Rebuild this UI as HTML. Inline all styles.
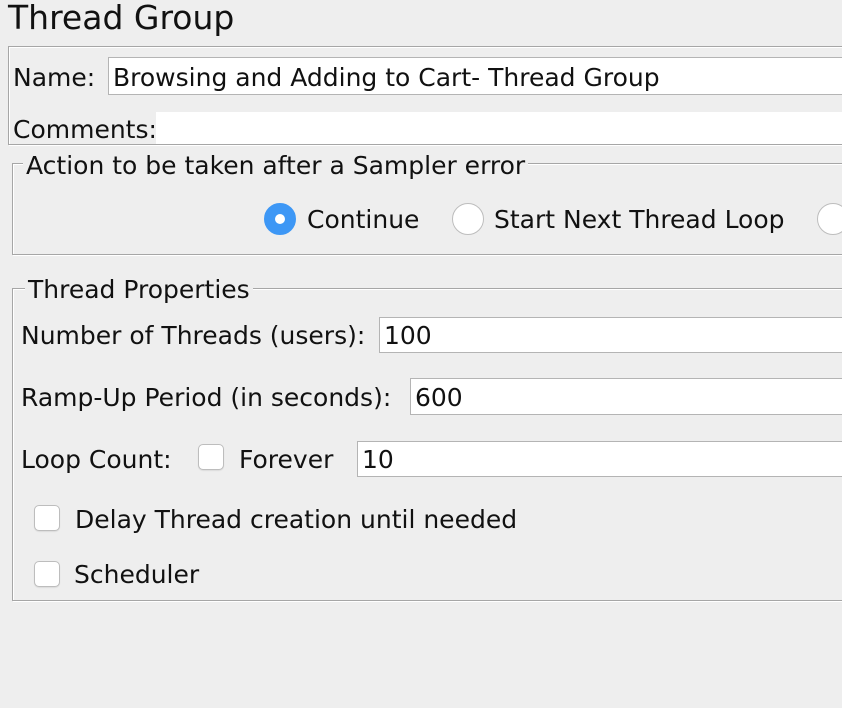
<!DOCTYPE html>
<html><head><style>
html,body{margin:0;padding:0;width:842px;height:708px;overflow:hidden;background:#eeeeee;}
body{position:relative;font-family:"DejaVu Sans","Liberation Sans",sans-serif;font-size:25px;color:#111;}
.a{position:absolute;white-space:nowrap;line-height:1;}
.box{position:absolute;border:1px solid #a6a6a6;box-shadow:inset 1px 1px 0 #fff,1px 1px 0 #fff;}
.fld{position:absolute;background:#fff;border:1px solid #b4b4b4;box-sizing:border-box;}
.cb{position:absolute;width:26px;height:26px;border:1px solid #bdbdbd;border-radius:5px;background:#fff;box-sizing:border-box;box-shadow:0 1px 1px rgba(0,0,0,.08);}
.rb{position:absolute;width:32px;height:32px;border-radius:50%;border:1px solid #bdbdbd;background:#fff;box-sizing:border-box;}
.leg{position:absolute;background:#eeeeee;padding:0 3px;line-height:1;white-space:nowrap;}
</style></head><body>
<div class="a" style="left:8px;top:1px;font-size:33px;">Thread Group</div>

<div class="box" style="left:8px;top:46px;width:840px;height:97px;"></div>
<div class="a" style="left:13px;top:65px;">Name:</div>
<div class="fld" style="left:108px;top:57px;width:740px;height:38px;"></div>
<div class="a" style="left:113px;top:65px;">Browsing and Adding to Cart- Thread Group</div>
<div class="a" style="left:13px;top:117px;">Comments:</div>
<div style="position:absolute;left:156px;top:112px;width:690px;height:32px;background:#fff;"></div>

<div class="box" style="left:12px;top:163px;width:836px;height:90px;"></div>
<div class="leg" style="left:23px;top:153px;">Action to be taken after a Sampler error</div>
<div class="rb" style="left:264px;top:203px;background:#3d97f5;border-color:#3d97f5;"></div>
<div style="position:absolute;left:275px;top:214px;width:10px;height:10px;border-radius:50%;background:#fff;"></div>
<div class="a" style="left:307px;top:207px;">Continue</div>
<div class="rb" style="left:452px;top:203px;"></div>
<div class="a" style="left:494px;top:207px;">Start Next Thread Loop</div>
<div class="rb" style="left:817px;top:203px;"></div>

<div class="box" style="left:12px;top:288px;width:836px;height:311px;"></div>
<div class="leg" style="left:25px;top:277px;">Thread Properties</div>
<div class="a" style="left:21px;top:323px;">Number of Threads (users):</div>
<div class="fld" style="left:379px;top:317px;width:470px;height:36px;"></div>
<div class="a" style="left:384px;top:323px;">100</div>
<div class="a" style="left:21px;top:385px;">Ramp-Up Period (in seconds):</div>
<div class="fld" style="left:410px;top:378px;width:440px;height:37px;"></div>
<div class="a" style="left:415px;top:385px;">600</div>
<div class="a" style="left:21px;top:447px;">Loop Count:</div>
<div class="cb" style="left:198px;top:444px;"></div>
<div class="a" style="left:239px;top:447px;">Forever</div>
<div class="fld" style="left:357px;top:441px;width:490px;height:36px;"></div>
<div class="a" style="left:362px;top:447px;">10</div>
<div class="cb" style="left:34px;top:505px;"></div>
<div class="a" style="left:75px;top:507px;">Delay Thread creation until needed</div>
<div class="cb" style="left:34px;top:561px;"></div>
<div class="a" style="left:74px;top:562px;">Scheduler</div>
</body></html>
